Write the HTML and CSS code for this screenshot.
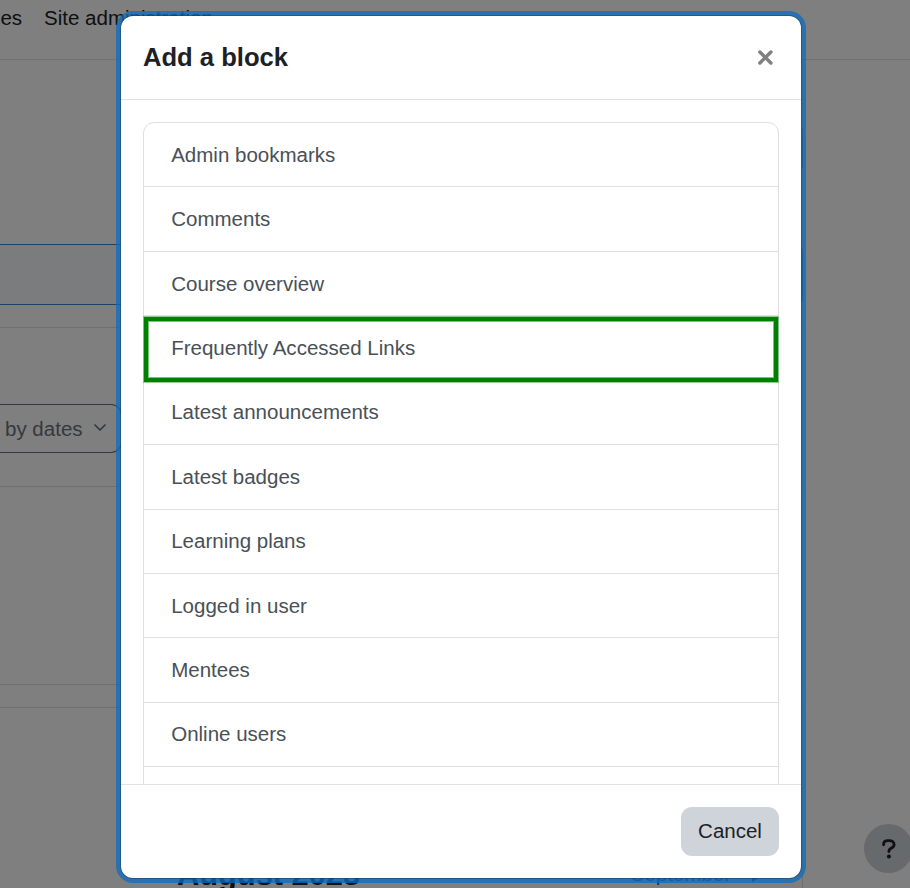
FILE: index.html
```html
<!DOCTYPE html>
<html lang="en">
<head>
<meta charset="utf-8">
<title>Add a block</title>
<link rel="stylesheet" href="styles.css">
</head>
<body>
<div class="page">
  <nav class="navbar"><span>es</span><span>Site administration</span></nav>
  <main class="main">
    <div class="actions"></div>
    <div class="notice"></div>
    <section class="timeline">
      <div class="sort"><span>by dates</span>
        <svg width="12" height="8" viewBox="0 0 12 8"><path d="M1 1l5 5 5-5" fill="none" stroke="#6a737b" stroke-width="1.7" stroke-linecap="round" stroke-linejoin="round"/></svg>
      </div>
    </section>
    <section class="empty"></section>
    <section class="calendar">
      <h2>August 2023</h2>
      <a class="next">September <svg width="10" height="12" viewBox="0 0 10 12"><path d="M0 0l10 6-10 6z" fill="#0f6cbf"/></svg></a>
    </section>
  </main>
</div>
<div class="help">
  <svg width="14" height="20" viewBox="0 0 14 20"><path d="M1.600 5.800V5.400C1.600 3 3.300 1.600 6 1.600h1.200c2.800 0 4.900 1.600 4.900 3.900 0 1.800-.9 2.800-2.700 3.600C7.700 10 6.900 10.700 6.900 12.600" fill="none" stroke="#1d2125" stroke-width="2.800" stroke-linecap="round" stroke-linejoin="round"/><circle cx="6.900" cy="17.600" r="2" fill="#1d2125"/></svg>
</div>
<div class="backdrop"></div>
<div class="modal" role="dialog">
  <header class="modal-header">
    <h1>Add a block</h1>
    <svg class="close" width="18" height="18" viewBox="0 0 18 18"><path d="M3.900 4l11 11M14.900 4L3.900 15" stroke="#808080" stroke-width="3.500" stroke-linecap="round"/></svg>
  </header>
  <div class="modal-body">
    <div class="list">
      <a class="item">Admin bookmarks</a>
      <a class="item">Comments</a>
      <a class="item">Course overview</a>
      <a class="item selected">Frequently Accessed Links</a>
      <a class="item">Latest announcements</a>
      <a class="item">Latest badges</a>
      <a class="item">Learning plans</a>
      <a class="item">Logged in user</a>
      <a class="item">Mentees</a>
      <a class="item">Online users</a>
      <a class="item"></a>
    </div>
  </div>
  <footer class="modal-footer"><button class="cancel">Cancel</button></footer>
</div>
</body>
</html>
```
FILE: styles.css
```css
* { box-sizing: border-box; }
body {
  margin: 0;
  height: 888px;
  overflow: hidden;
  background: #fff;
  color: #1d2125;
  font: 20.52px/31px "Liberation Sans", Arial, sans-serif;
}
.page { height: 888px; overflow: hidden; }
.navbar {
  display: flex;
  gap: 22px;
  height: 60px;
  padding: 2px 0 0 .4px;
  border-bottom: 1px solid #dee2e6;
}
.main {
  width: 803px;
  height: 880px;
  padding-top: 69px;
  border-right: 1px solid #dfdfdf;
}
.actions { height: 39px; margin-right: -1px; border-right: 1px solid #6a737b; }
.notice {
  height: 61px;
  margin: 76px -1px 0 0;
  border: 1px solid #3984ca;
  border-left: 0;
  border-radius: 0 8px 8px 0;
  background: #f5f8fc;
}
.timeline {
  height: 160px;
  margin-top: 22px;
  padding-top: 76px;
  border-top: 1px solid #dfdfdf;
  border-bottom: 1px solid #dfdfdf;
}
.sort {
  display: flex;
  align-items: center;
  gap: 11px;
  width: 122px;
  height: 49px;
  padding-left: 5px;
  border: 1px solid #6a737b;
  border-left: 0;
  border-radius: 0 11px 11px 0;
  color: #6a737b;
}
.sort svg { margin-top: -1px; }
.empty { height: 198px; border-bottom: 1px solid #dfdfdf; }
.calendar {
  display: flex;
  justify-content: space-between;
  height: 220px;
  margin-top: 22px;
  padding: 149px 40px 0 177px;
  border-top: 1px solid #dfdfdf;
}
.calendar h2 { margin: 0; font-size: 30.8px; line-height: 36px; }
.next { display: flex; align-items: center; gap: 21px; height: 33px; color: #0f6cbf; }
.next svg { margin-top: 4px; }
.help {
  position: absolute;
  left: 864px;
  top: 824px;
  display: flex;
  align-items: center;
  justify-content: center;
  width: 49px;
  height: 49px;
  border-radius: 50%;
  background: #ced4da;
}
.backdrop { position: absolute; inset: 0; background: rgba(0, 0, 0, .5); }
.modal {
  position: absolute;
  left: 120px;
  top: 15px;
  display: flex;
  flex-direction: column;
  width: 682px;
  height: 864px;
  border: 1px solid rgba(0, 0, 0, .2);
  border-radius: 13px;
  background: #fff;
  background-clip: padding-box;
  box-shadow: 0 0 0 4px rgba(15, 108, 191, .75);
}
.modal-header {
  display: flex;
  justify-content: space-between;
  align-items: center;
  flex: none;
  height: 84px;
  padding: 0 27px 1px 22px;
  border-bottom: 1px solid #dee2e6;
}
.modal-header h1 { margin: 0; font-size: 25.6px; line-height: 38px; }
.modal-body { flex: 1; min-height: 0; overflow: hidden; padding: 22px 22px 0; }
.list { border: 1px solid #dfdfdf; border-radius: 11px; }
.item {
  display: flex;
  align-items: center;
  height: 64.43px;
  padding: 0 27.2px 1.04px;
  border-bottom: 1px solid #dfdfdf;
  color: #495057;
}
.selected {
  position: relative;
  height: 65px;
  margin: .75px 0 -1.34px;
  padding: 0 23.2px 4px;
  border: 4px solid #008000;
  box-shadow: 0 0 0 1px rgba(0, 128, 0, .4), inset 0 0 0 1px rgba(0, 128, 0, .5);
}
.modal-footer {
  display: flex;
  justify-content: flex-end;
  flex: none;
  height: 94px;
  padding: 22px 22px 0;
  border-top: 1px solid #dee2e6;
}
.cancel {
  width: 98px;
  height: 49px;
  padding: 0 0 3px;
  border: 0;
  border-radius: 11px;
  background: #ced4da;
  color: #1d2125;
  font: inherit;
}
```
